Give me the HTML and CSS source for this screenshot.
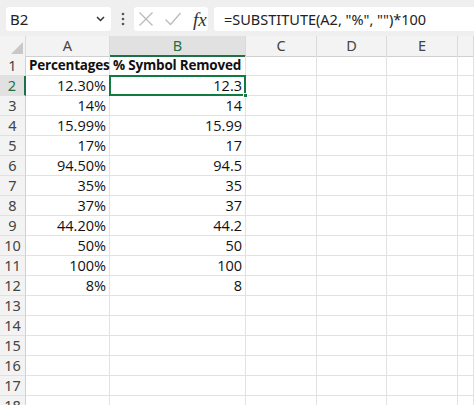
FILE: index.html
```html
<!DOCTYPE html>
<html>
<head>
<meta charset="utf-8">
<link rel="stylesheet" href="styles.css">
</head>
<body>
<div class="app">
  <div class="toolbar">
    <div class="namebox">
      <span class="name">B2</span>
      <svg class="chev" width="9" height="6" viewBox="0 0 9 6"><polyline points="1,1 4.5,4.5 8,1" fill="none" stroke="#333" stroke-width="1.5"/></svg>
    </div>
    <div class="dots">
      <svg width="4" height="14" viewBox="0 0 4 14"><circle cx="2" cy="2" r="1.3" fill="#555"/><circle cx="2" cy="7" r="1.3" fill="#555"/><circle cx="2" cy="12" r="1.3" fill="#555"/></svg>
    </div>
    <div class="fxbox">
      <svg class="ico" width="16" height="16" viewBox="0 0 16 16"><path d="M1.5 1.5 L14.5 14.5 M14.5 1.5 L1.5 14.5" stroke="#b9b9b9" stroke-width="1.2" fill="none"/></svg>
      <svg class="ico" width="18" height="16" viewBox="0 0 18 16"><path d="M1.5 8.5 L6.5 13.5 L16.5 2" stroke="#b9b9b9" stroke-width="1.2" fill="none"/></svg>
      <span class="fx">fx</span>
    </div>
    <div class="formula">=SUBSTITUTE(A2, "%", "")*100</div>
  </div>
  <div class="sheet">
    <div class="row head">
      <div class="corner"><svg width="12" height="12" viewBox="0 0 12 12"><polygon points="12,0 12,12 0,12" fill="#c8c8c8"/></svg></div>
      <div class="ch">A</div><div class="ch active">B</div><div class="ch">C</div><div class="ch">D</div><div class="ch">E</div><div class="ch"></div>
    </div>
    <div class="row"><div class="rh">1</div><div class="c b">Percentages</div><div class="c b">% Symbol Removed</div><div class="c"></div><div class="c"></div><div class="c"></div><div class="c"></div></div>
    <div class="row"><div class="rh active">2</div><div class="c r">12.30%</div><div class="c r sel">12.3<span class="handle"></span></div><div class="c"></div><div class="c"></div><div class="c"></div><div class="c"></div></div>
    <div class="row"><div class="rh">3</div><div class="c r">14%</div><div class="c r">14</div><div class="c"></div><div class="c"></div><div class="c"></div><div class="c"></div></div>
    <div class="row"><div class="rh">4</div><div class="c r">15.99%</div><div class="c r">15.99</div><div class="c"></div><div class="c"></div><div class="c"></div><div class="c"></div></div>
    <div class="row"><div class="rh">5</div><div class="c r">17%</div><div class="c r">17</div><div class="c"></div><div class="c"></div><div class="c"></div><div class="c"></div></div>
    <div class="row"><div class="rh">6</div><div class="c r">94.50%</div><div class="c r">94.5</div><div class="c"></div><div class="c"></div><div class="c"></div><div class="c"></div></div>
    <div class="row"><div class="rh">7</div><div class="c r">35%</div><div class="c r">35</div><div class="c"></div><div class="c"></div><div class="c"></div><div class="c"></div></div>
    <div class="row"><div class="rh">8</div><div class="c r">37%</div><div class="c r">37</div><div class="c"></div><div class="c"></div><div class="c"></div><div class="c"></div></div>
    <div class="row"><div class="rh">9</div><div class="c r">44.20%</div><div class="c r">44.2</div><div class="c"></div><div class="c"></div><div class="c"></div><div class="c"></div></div>
    <div class="row"><div class="rh">10</div><div class="c r">50%</div><div class="c r">50</div><div class="c"></div><div class="c"></div><div class="c"></div><div class="c"></div></div>
    <div class="row"><div class="rh">11</div><div class="c r">100%</div><div class="c r">100</div><div class="c"></div><div class="c"></div><div class="c"></div><div class="c"></div></div>
    <div class="row"><div class="rh">12</div><div class="c r">8%</div><div class="c r">8</div><div class="c"></div><div class="c"></div><div class="c"></div><div class="c"></div></div>
    <div class="row"><div class="rh">13</div><div class="c"></div><div class="c"></div><div class="c"></div><div class="c"></div><div class="c"></div><div class="c"></div></div>
    <div class="row"><div class="rh">14</div><div class="c"></div><div class="c"></div><div class="c"></div><div class="c"></div><div class="c"></div><div class="c"></div></div>
    <div class="row"><div class="rh">15</div><div class="c"></div><div class="c"></div><div class="c"></div><div class="c"></div><div class="c"></div><div class="c"></div></div>
    <div class="row"><div class="rh">16</div><div class="c"></div><div class="c"></div><div class="c"></div><div class="c"></div><div class="c"></div><div class="c"></div></div>
    <div class="row"><div class="rh">17</div><div class="c"></div><div class="c"></div><div class="c"></div><div class="c"></div><div class="c"></div><div class="c"></div></div>
    <div class="row"><div class="rh">18</div><div class="c"></div><div class="c"></div><div class="c"></div><div class="c"></div><div class="c"></div><div class="c"></div></div>
  </div>
</div>
</body>
</html>
```
FILE: styles.css
```css
* { box-sizing: border-box; }
html, body { margin: 0; padding: 0; background: #fff; }
.app { width: 474px; height: 405px; overflow: hidden; font-family: "Noto Sans", "Open Sans", sans-serif; }

.toolbar {
  height: 36px;
  background: #efefef;
  display: flex;
  align-items: flex-start;
  padding: 7px 0 0 6px;
}
.namebox {
  width: 105px; height: 24px;
  background: #fff; border-radius: 3px;
  display: flex; align-items: center; justify-content: space-between;
  padding: 0 6px 0 4px;
}
.name { font-size: 15px; color: #222; }
.dots { width: 23px; height: 24px; display: flex; align-items: center; justify-content: center; }
.fxbox {
  width: 74px; height: 24px; background: #fff; border-radius: 3px;
  display: flex; align-items: center; padding: 0 0 0 4px; gap: 10px;
}
.ico { display: block; }
.fx { font-family: "Liberation Serif", "DejaVu Serif", serif; font-style: italic; font-size: 19px; color: #333; margin-left: 1px; line-height: 1; }
.formula {
  flex: 1; height: 24px; margin-left: 6px; background: #fff;
  border-radius: 3px 0 0 3px;
  font-size: 14.5px; color: #222; padding-left: 10px; line-height: 24px; white-space: nowrap;
}

.sheet { display: flex; flex-direction: column; }
.row {
  display: grid;
  grid-template-columns: 26px 84px 136px 71px 70px 71px 1fr;
  height: 20px;
  flex: none;
}
.head > div { background: #f3f3f3; border-bottom: 1px solid #d0d0d0; border-right: 1px solid #dadada; }
.corner { display: flex; align-items: flex-end; justify-content: flex-end; padding: 0 2px 2px 0; }
.ch { text-align: center; font-size: 14.5px; line-height: 19px; color: #444; }
.ch.active { background: #e1e1e1 !important; color: #1e7145; border-bottom: 2px solid #1e7145 !important; }
.rh {
  background: #f3f3f3; border-right: 1px solid #d0d0d0; border-bottom: 1px solid #e0e0e0;
  text-align: center; font-size: 14.5px; line-height: 19px; color: #444;
}
.rh.active { background: #e1e1e1; color: #1e7145; border-right: 2px solid #1e7145; }
.c {
  border-right: 1px solid #e2e2e2; border-bottom: 1px solid #e2e2e2;
  font-family: "Open Sans", "Noto Sans", sans-serif;
  font-size: 14.5px; line-height: 19px; color: #111; white-space: nowrap; overflow: visible;
  padding: 0 3px;
}
.c.r { text-align: right; }
.c.b { font-size: 13.5px; font-weight: 700; padding-left: 3px; letter-spacing: -0.2px; }
.sel { position: relative; }
.sel::before {
  content: ""; position: absolute; left: -1px; top: -1px; right: -1px; bottom: -1px;
  border: 2px solid #107c41;
}
.handle {
  position: absolute; right: -3px; bottom: -3px; width: 5px; height: 5px;
  background: #107c41; border: 1px solid #fff;
}
```
